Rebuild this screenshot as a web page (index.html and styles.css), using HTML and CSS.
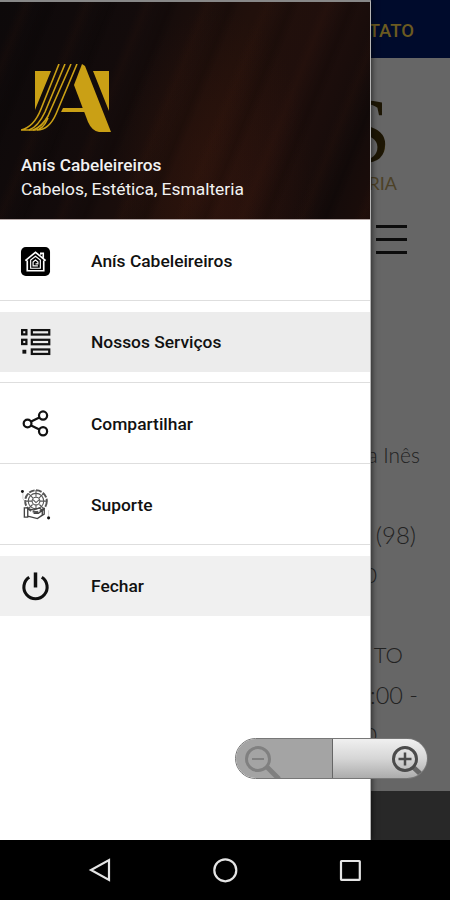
FILE: index.html
```html
<!DOCTYPE html>
<html lang="pt-BR">
<head>
    <meta charset="UTF-8">
    <meta name="viewport" content="width=device-width, initial-scale=1.0">
    <title>Anís Cabeleireiros</title>
    <link rel="stylesheet" href="styles.css">
</head>
<body>
    <div class="phone">
        <main class="page">
            <div class="topbar">TATO</div>
            <div class="brand">
                <div class="brand-name">S</div>
                <div class="brand-sub">RIA</div>
            </div>
            <div class="hamburger"><span></span><span></span><span></span></div>
            <div class="info">
                <p class="line-city">a Inês</p>
                <p class="line-phone">(98)</p>
                <p class="line-zero">0</p>
                <p class="line-title">TO</p>
                <p class="line-hours">:00 -</p>
                <p class="line-zero last">0</p>
            </div>
            <div class="footer"></div>
        </main>

        <aside class="drawer">
            <header class="drawer-header">
                <svg class="logo" width="90" height="70" viewBox="0 0 90 70">
                    <g fill="#caa015">
                        <path d="M14 7H30L16 41L14 46Z"/>
                        <path d="M72 7H88V47Z"/>
                        <path d="M61 0L64 2L90 68H78Q71 67 67 58L53 21Z"/>
                        <path d="M42 44H66V48H40Z"/>
                    </g>
                    <g fill="none" stroke="#caa015" stroke-width="1.6">
                        <path d="M38 0L20 45Q13 63 0 66H14Q22 66 27 54"/>
                        <path d="M44 0L24 48Q17 63 8 66"/>
                        <path d="M50 0L27 52Q21 63 12 66"/>
                        <path d="M56 0L35 50Q28 66 16 66"/>
                    </g>
                </svg>
                <h1>Anís Cabeleireiros</h1>
                <p>Cabelos, Estética, Esmalteria</p>
            </header>

            <ul class="menu">
                <li>
                    <a class="item">
                        <svg class="icon" viewBox="0 0 32 32">
                            <rect x="1" y="1" width="30" height="30" rx="5" fill="#000"/>
                            <g fill="none" stroke="#fff" stroke-width="1.7">
                                <path d="M5.5 15L16 6.5L26.5 15M21.5 9V7.5H24V12M7.5 15V25.5H24.5V15"/>
                                <path d="M11 23V14.5L16 10.5L21 14.5V23Z" stroke-width="1.2"/>
                                <path d="M18.5 20.5H13.5V16.5L16 14.5L18.5 16.5V18.5H16" stroke-width="1.2"/>
                            </g>
                        </svg>
                        <span class="label">Anís Cabeleireiros</span>
                    </a>
                </li>
                <li>
                    <a class="item active">
                        <svg class="icon" viewBox="0 0 32 32">
                            <g fill="none" stroke="#111" stroke-width="2.3">
                                <rect x="2.2" y="3.2" width="4.4" height="4.4"/>
                                <rect x="12.2" y="3.2" width="18" height="4.6"/>
                                <rect x="2.2" y="13.2" width="4.4" height="4.4"/>
                                <rect x="12.2" y="13.2" width="18" height="4.6"/>
                                <rect x="12.2" y="23.2" width="18" height="4.6"/>
                            </g>
                            <rect x="2.5" y="23.5" width="4" height="4" fill="#111"/>
                        </svg>
                        <span class="label">Nossos Serviços</span>
                    </a>
                </li>
                <li>
                    <a class="item">
                        <svg class="icon" viewBox="0 0 32 32">
                            <g fill="none" stroke="#111" stroke-width="2.3">
                                <circle cx="7.8" cy="16" r="4"/>
                                <circle cx="23.8" cy="7.8" r="4.2"/>
                                <circle cx="23.8" cy="24" r="4.2"/>
                                <path d="M11.500 14L20 9.800M11.500 18L20 22.200"/>
                            </g>
                        </svg>
                        <span class="label">Compartilhar</span>
                    </a>
                </li>
                <li>
                    <a class="item">
                        <svg class="icon" viewBox="0 0 32 32">
                            <g fill="none" stroke="#555" stroke-width="1.1">
                                <circle cx="16.5" cy="12.5" r="11.2" stroke-width="2" stroke-dasharray="6 1.5"/>
                                <circle cx="16.5" cy="12.5" r="8"/>
                                <circle cx="16.5" cy="12.5" r="4"/>
                                <path d="M16.5 1V8M16.5 16V21M5 12.5H12.5M20.5 12.5H28M8.5 4.5L13.5 9.5M24.5 4.5L19.5 9.5M20 16L24 20M13 16L9 20M13.5 11L16.5 14L20 11"/>
                                <path d="M4.5 19.5H8V29H4.5ZM8 20.5L14 21.5L20 19.5L23 22V27L18 30.5L8 28M14 25H19L25 20.5V26L18 30.5" stroke="#444" stroke-width="1.4"/>
                                <path d="M3 4V10L5 13M29.5 22V28" stroke="#bbb" stroke-width=".7"/>
                            </g>
                            <circle cx="2.5" cy="2.5" r="1.5" fill="#111"/>
                            <circle cx="29.5" cy="29.8" r="1.6" fill="#111"/>
                        </svg>
                        <span class="label">Suporte</span>
                    </a>
                </li>
                <li>
                    <a class="item shaded">
                        <svg class="icon" viewBox="0 0 32 32">
                            <path d="M9.500 6.500A12 12 0 1 0 22.500 6.500" fill="none" stroke="#111" stroke-width="3.2"/>
                            <path d="M16 1.500V17" stroke="#111" stroke-width="3.6"/>
                        </svg>
                        <span class="label">Fechar</span>
                    </a>
                </li>
            </ul>
        </aside>

        <div class="zoom">
            <div class="zoom-out">
                <svg width="40" height="38" viewBox="0 0 40 38" fill="none" stroke="#808080">
                    <path d="M24 27L36 39" stroke-width="5"/>
                    <circle cx="15" cy="19" r="11.5" stroke-width="3"/>
                    <path d="M9 19H21" stroke-width="2"/>
                </svg>
            </div>
            <div class="zoom-in">
                <svg width="40" height="38" viewBox="0 0 40 38" fill="none" stroke="#4b4b4b">
                    <path d="M23 27L36 39" stroke="#666" stroke-width="5"/>
                    <circle cx="15" cy="19" r="11.5" stroke-width="3"/>
                    <path d="M8.5 19H21.5M15 12.5V25.5" stroke-width="2.5"/>
                </svg>
            </div>
        </div>
    </div>

    <nav class="navbar">
        <svg width="26" height="26" viewBox="0 0 26 26"><path d="M22 3V23L4 13Z"/></svg>
        <svg width="26" height="26" viewBox="0 0 26 26"><circle cx="13.3" cy="13.3" r="11"/></svg>
        <svg width="26" height="26" viewBox="0 0 26 26"><rect x="4" y="4" width="18.8" height="18.8" rx=".5"/></svg>
    </nav>
</body>
</html>
```

FILE: styles.css
```css
* {
    margin: 0;
    padding: 0;
    box-sizing: border-box;
}

body {
    width: 450px;
    height: 900px;
    overflow: hidden;
    background-color: #000;
    font-family: Roboto, sans-serif;
}

.phone {
    position: relative;
    height: 840px;
    overflow: hidden;
}

/* dimmed page behind the drawer */
.page {
    display: flex;
    flex-direction: column;
    height: 840px;
    padding-left: 364px;
    background-color: #666;
    overflow: hidden;
}

.topbar {
    height: 58px;
    margin-left: -364px;
    padding-right: 36px;
    background-color: #000b2c;
    color: #6b5a20;
    font-size: 18.5px;
    font-weight: 500;
    line-height: 62px;
    text-align: right;
}

.brand {
    height: 167px;
    padding-top: 36px;
}

/* gold lettering with a dark edge */
.brand-name {
    display: flex;
    justify-content: flex-end;
    width: 27px;
    height: 78px;
    background: linear-gradient(100deg, #1d1604 0 72%, #7a6308 82%, #2c2204);
    background-clip: text;
    -webkit-background-clip: text;
    color: transparent;
    font-family: "Liberation Serif", serif;
    font-size: 94px;
    line-height: 72px;
}

.brand-sub {
    display: flex;
    justify-content: flex-end;
    width: 33px;
    color: #4c4127;
    font-family: Lato, sans-serif;
    font-size: 18px;
    line-height: 22px;
}

.hamburger {
    display: flex;
    flex-direction: column;
    gap: 10px;
    width: 43px;
    padding-left: 12px;
}

.hamburger span {
    height: 3px;
    background-color: #0c0c0c;
}

.info {
    height: 537px;
    padding-top: 181px;
    color: #222;
    font-family: Lato, sans-serif;
    font-size: 22px;
    font-weight: 300;
    line-height: 40px;
    white-space: nowrap;
}

.info p {
    display: flex;
    justify-content: flex-end;
}

.info .line-city {
    width: 56px;
    margin-bottom: 40px;
    font-size: 21px;
}

.info .line-phone {
    width: 52px;
    font-size: 24px;
}

.line-zero {
    width: 13px;
    margin-bottom: 40px;
}

.line-title {
    width: 39px;
}

.info .line-hours {
    width: 54px;
    font-size: 23.5px;
}

.line-zero.last {
    margin-bottom: 0;
}

.footer {
    flex: 1;
    margin-left: -364px;
    background-color: #282828;
}

/* drawer */
.drawer {
    position: absolute;
    top: 0;
    left: 0;
    width: 371px;
    height: 840px;
    background-color: #fff;
    border-top: 2px solid #888;
    border-right: 1px solid #b5b5b5;
    box-shadow: 1px 0 6px rgba(0, 0, 0, 0.6);
}

.drawer-header {
    height: 218px;
    padding: 62px 21px 0;
    border-bottom: 1px solid #b5a9a7;
    color: #f2f2f2;
    background:
        repeating-linear-gradient(112deg, transparent 0 17px, rgba(70, 30, 15, 0.1) 25px, transparent 34px, rgba(0, 0, 0, 0.16) 47px, transparent 56px),
        radial-gradient(ellipse 100px 190px at 215px 195px, rgba(66, 26, 14, 0.35), transparent),
        linear-gradient(112deg, #0d090a 0%, #130b0b 32%, #21100b 56%, #200f0c 72%, #140b0a 90%, #1c0d0a 100%);
}

.logo {
    display: block;
}

.drawer-header h1 {
    margin-top: 19px;
    font-size: 17.3px;
    font-weight: 500;
    line-height: 24px;
}

.drawer-header p {
    margin-top: 1px;
    font-size: 17.4px;
    line-height: 23px;
    white-space: nowrap;
}

.menu {
    list-style: none;
}

.menu li {
    height: 81.25px;
    padding: 11px 0 10px;
    border-bottom: 1px solid #dedede;
}

.menu li:last-child {
    border-bottom: none;
}

.item {
    display: flex;
    align-items: center;
    height: 60px;
    padding-left: 20px;
    color: #111;
}

.item.active {
    background-color: #ececec;
}

.item.shaded {
    background-color: #f0f0f0;
}

.icon {
    width: 31px;
    height: 31px;
    margin-right: 40px;
}

.label {
    font-size: 17.4px;
    font-weight: 500;
}

/* zoom buttons */
.zoom {
    position: absolute;
    top: 738px;
    left: 235px;
    display: flex;
    width: 193px;
    height: 41px;
    overflow: hidden;
    border: 1.5px solid #777;
    border-radius: 21px;
}

.zoom-out,
.zoom-in {
    display: flex;
    align-items: center;
}

.zoom-out {
    width: 97px;
    padding-left: 7px;
    background-color: #a4a4a4;
    border-right: 1.5px solid #666;
}

.zoom-in {
    flex: 1;
    justify-content: flex-end;
    background: linear-gradient(#f0f0f0, #d6d6d6 50%, #acacac);
}

.zoom-in svg {
    margin-right: -3px;
}

/* system navigation */
.navbar {
    display: flex;
    justify-content: space-between;
    align-items: center;
    height: 60px;
    padding: 0 87px;
    background-color: #000;
}

.navbar svg {
    fill: none;
    stroke: #e4e4e4;
    stroke-width: 2.2;
}
```
